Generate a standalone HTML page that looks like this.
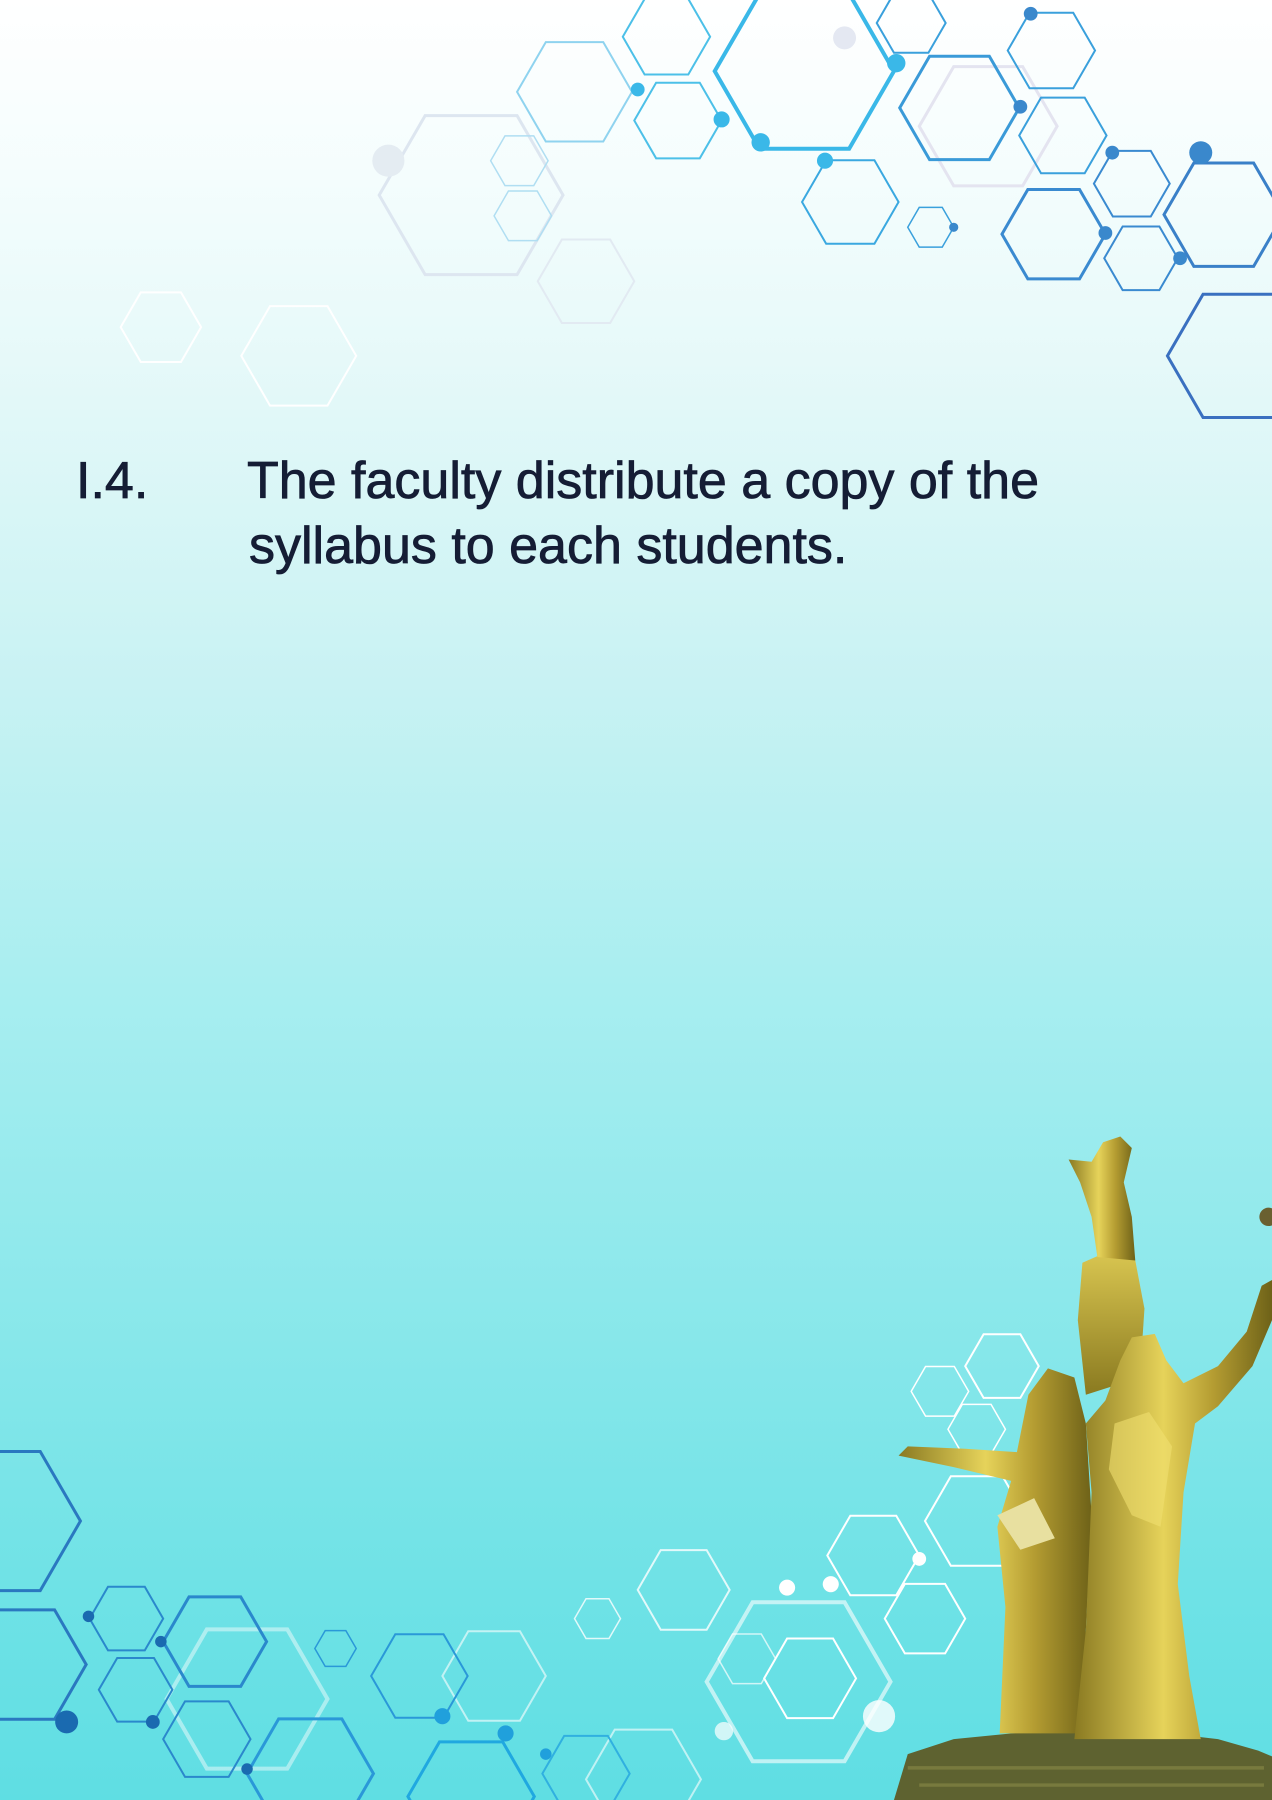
<!DOCTYPE html>
<html><head><meta charset="utf-8"><style>
html,body{margin:0;padding:0}
body{width:1272px;height:1800px;position:relative;overflow:hidden;
background:linear-gradient(to bottom,#ffffff 0%,#f4fdfd 10%,#e6f9f9 20%,#c8f2f3 38%,#a8eef0 55%,#8ce8eb 72%,#6fe2e6 88%,#5fdee3 100%);
font-family:"Liberation Sans",sans-serif;color:#151d35}
svg{position:absolute;left:0;top:0}
.t{position:absolute;font-size:52px;-webkit-text-stroke:0.8px #151d35;line-height:65px;white-space:nowrap}
</style></head><body>
<svg width="1272" height="1800" viewBox="0 0 1107 1568" preserveAspectRatio="none">
<defs>
<path id="h" d="M1 0L0.5 0.866L-0.5 0.866L-1 0L-0.5 -0.866L0.5 -0.866Z" fill="none" vector-effect="non-scaling-stroke"/>
<linearGradient id="g" x1="0" y1="0" x2="1" y2="0"><stop offset="0" stop-color="#8a7a22"/><stop offset=".45" stop-color="#e6d35a"/><stop offset=".7" stop-color="#b59d32"/><stop offset="1" stop-color="#6e6218"/></linearGradient>
<linearGradient id="g2" x1="0" y1="0" x2="0" y2="1"><stop offset="0" stop-color="#d8c550"/><stop offset="1" stop-color="#8a7a20"/></linearGradient>
</defs>
<g>
<use href="#h" transform="translate(410,170) scale(80)" stroke="#dde6f0" stroke-width="3"/>
<use href="#h" transform="translate(510,245) scale(42)" stroke="#e2eaf2" stroke-width="2"/>
<use href="#h" transform="translate(140,285) scale(35)" stroke="#ffffff" stroke-width="2"/>
<use href="#h" transform="translate(260,310) scale(50)" stroke="#ffffff" stroke-width="2"/>
<use href="#h" transform="translate(860,110) scale(60)" stroke="#e4e4f0" stroke-width="3"/>
<use href="#h" transform="translate(700,62) scale(78)" stroke="#3ab8e8" stroke-width="4"/>
<use href="#h" transform="translate(580,32) scale(38)" stroke="#4cc0e8" stroke-width="2"/>
<use href="#h" transform="translate(500,80) scale(50)" stroke="#8fd3ef" stroke-width="2"/>
<use href="#h" transform="translate(590,105) scale(38)" stroke="#4cc0e8" stroke-width="2"/>
<use href="#h" transform="translate(452,140) scale(25)" stroke="#b0def2" stroke-width="1.5"/>
<use href="#h" transform="translate(455,188) scale(25)" stroke="#b0def2" stroke-width="1.5"/>
<use href="#h" transform="translate(740,176) scale(42)" stroke="#3aa8e0" stroke-width="2"/>
<use href="#h" transform="translate(835,94) scale(52)" stroke="#3a9ad8" stroke-width="3"/>
<use href="#h" transform="translate(915,44) scale(38)" stroke="#3aa0dc" stroke-width="2"/>
<use href="#h" transform="translate(925,118) scale(38)" stroke="#3aa0dc" stroke-width="2"/>
<use href="#h" transform="translate(917,204) scale(45)" stroke="#3a8ad0" stroke-width="3"/>
<use href="#h" transform="translate(985,160) scale(33)" stroke="#3a8ad0" stroke-width="2"/>
<use href="#h" transform="translate(993,225) scale(32)" stroke="#3a8ad0" stroke-width="2"/>
<use href="#h" transform="translate(1065,187) scale(52)" stroke="#3a80c8" stroke-width="3"/>
<use href="#h" transform="translate(1078,310) scale(62)" stroke="#3a70c0" stroke-width="3"/>
<use href="#h" transform="translate(793,20) scale(30)" stroke="#3aa0dc" stroke-width="2"/>
<use href="#h" transform="translate(810,198) scale(20)" stroke="#3aa0dc" stroke-width="1.5"/>
<g fill="#3ab8e8"><circle cx="662" cy="124" r="8"/><circle cx="780" cy="55" r="8"/><circle cx="718" cy="140" r="7"/><circle cx="628" cy="104" r="7"/><circle cx="555" cy="78" r="6"/></g>
<g fill="#3a88cc"><circle cx="1045" cy="133" r="10"/><circle cx="968" cy="133" r="6"/><circle cx="962" cy="203" r="6"/><circle cx="1027" cy="225" r="6"/><circle cx="888" cy="93" r="6"/><circle cx="897" cy="12" r="6"/><circle cx="830" cy="198" r="4"/></g>
<circle cx="338" cy="140" r="14" fill="#e4ecf2"/><circle cx="735" cy="33" r="10" fill="#e4e8f2"/>
</g>
<g>
<use href="#h" transform="translate(215,1480) scale(70)" stroke="#ffffff" stroke-width="4" opacity=".45"/>
<use href="#h" transform="translate(695,1465) scale(80)" stroke="#ffffff" stroke-width="4" opacity=".6"/>
<use href="#h" transform="translate(430,1460) scale(45)" stroke="#ffffff" stroke-width="2" opacity=".6"/>
<use href="#h" transform="translate(560,1550) scale(50)" stroke="#ffffff" stroke-width="2" opacity=".6"/>
<use href="#h" transform="translate(595,1385) scale(40)" stroke="#ffffff" stroke-width="2" opacity=".8"/>
<use href="#h" transform="translate(520,1410) scale(20)" stroke="#ffffff" stroke-width="1.5" opacity=".8"/>
<use href="#h" transform="translate(705,1462) scale(40)" stroke="#ffffff" stroke-width="2"/>
<use href="#h" transform="translate(650,1445) scale(25)" stroke="#ffffff" stroke-width="1.5" opacity=".7"/>
<use href="#h" transform="translate(760,1355) scale(40)" stroke="#ffffff" stroke-width="2"/>
<use href="#h" transform="translate(805,1410) scale(35)" stroke="#ffffff" stroke-width="2"/>
<use href="#h" transform="translate(850,1325) scale(45)" stroke="#ffffff" stroke-width="2"/>
<use href="#h" transform="translate(818,1212) scale(25)" stroke="#ffffff" stroke-width="1.5"/>
<use href="#h" transform="translate(872,1190) scale(32)" stroke="#ffffff" stroke-width="2"/>
<use href="#h" transform="translate(850,1245) scale(25)" stroke="#ffffff" stroke-width="1.5"/>
<use href="#h" transform="translate(0,1325) scale(70)" stroke="#2a78c0" stroke-width="3"/>
<use href="#h" transform="translate(20,1450) scale(55)" stroke="#2a78c0" stroke-width="3"/>
<use href="#h" transform="translate(110,1410) scale(32)" stroke="#2a88cc" stroke-width="2"/>
<use href="#h" transform="translate(187,1430) scale(45)" stroke="#2a88cc" stroke-width="3"/>
<use href="#h" transform="translate(118,1472) scale(32)" stroke="#2a88cc" stroke-width="2"/>
<use href="#h" transform="translate(180,1515) scale(38)" stroke="#2a88cc" stroke-width="2"/>
<use href="#h" transform="translate(270,1545) scale(55)" stroke="#2a98d8" stroke-width="3"/>
<use href="#h" transform="translate(365,1460) scale(42)" stroke="#2a98d8" stroke-width="2"/>
<use href="#h" transform="translate(292,1436) scale(18)" stroke="#2a98d8" stroke-width="1.5"/>
<use href="#h" transform="translate(410,1565) scale(55)" stroke="#20a8e0" stroke-width="3"/>
<use href="#h" transform="translate(510,1545) scale(38)" stroke="#30b0e0" stroke-width="2"/>
<g fill="#1a6ab0"><circle cx="58" cy="1500" r="10"/><circle cx="77" cy="1408" r="5"/><circle cx="133" cy="1500" r="6"/><circle cx="140" cy="1430" r="5"/><circle cx="215" cy="1541" r="5"/></g>
<g fill="#20a0dc"><circle cx="385" cy="1495" r="7"/><circle cx="440" cy="1510" r="7"/><circle cx="475" cy="1528" r="5"/></g>
<g fill="#ffffff"><circle cx="765" cy="1495" r="14" opacity=".8"/><circle cx="685" cy="1383" r="7"/><circle cx="723" cy="1380" r="7"/><circle cx="800" cy="1358" r="6"/><circle cx="630" cy="1508" r="8" opacity=".7"/></g>
</g>
<g>
<path d="M778 1568 L790 1528 L830 1515 L900 1508 L1000 1508 L1060 1515 L1095 1525 L1107 1530 L1107 1568 Z" fill="#5e6230"/>
<path d="M790 1540 L1100 1540 M800 1555 L1100 1555" stroke="#8a8a48" stroke-width="3" opacity=".6"/>
<path d="M942 1100 L960 1092 L988 1098 L996 1140 L992 1200 L945 1215 L938 1150 Z" fill="url(#g2)"/>
<path d="M955 1095 L950 1060 L940 1030 L930 1010 L950 1012 L960 995 L975 990 L985 1000 L978 1030 L985 1060 L988 1098 Z" fill="url(#g)"/>
<path d="M870 1510 L875 1400 L868 1330 L880 1290 L830 1278 L782 1268 L790 1260 L840 1262 L885 1265 L895 1215 L912 1192 L935 1200 L945 1240 L950 1320 L945 1420 L948 1510 Z" fill="url(#g)"/>
<path d="M868 1320 L900 1305 L918 1340 L888 1350 Z" fill="#e8e0a0"/>
<path d="M935 1515 L945 1420 L950 1300 L945 1240 L962 1220 L975 1185 L985 1165 L1005 1162 L1015 1185 L1030 1205 L1060 1190 L1085 1160 L1098 1120 L1107 1115 L1107 1150 L1090 1190 L1060 1225 L1040 1240 L1030 1300 L1025 1380 L1035 1460 L1045 1515 Z" fill="url(#g)"/>
<path d="M970 1240 L1000 1230 L1020 1260 L1010 1330 L985 1320 L965 1280 Z" fill="#f0e070" opacity=".6"/>
<circle cx="1104" cy="1060" r="8" fill="#6a6030"/>
</g>
</svg>
<div class="t" style="left:76px;top:449px">I.4.</div>
<div class="t" style="left:247px;top:449px">The faculty distribute a copy of the</div>
<div class="t" style="left:249px;top:514px">syllabus to each students.</div>
</body></html>
